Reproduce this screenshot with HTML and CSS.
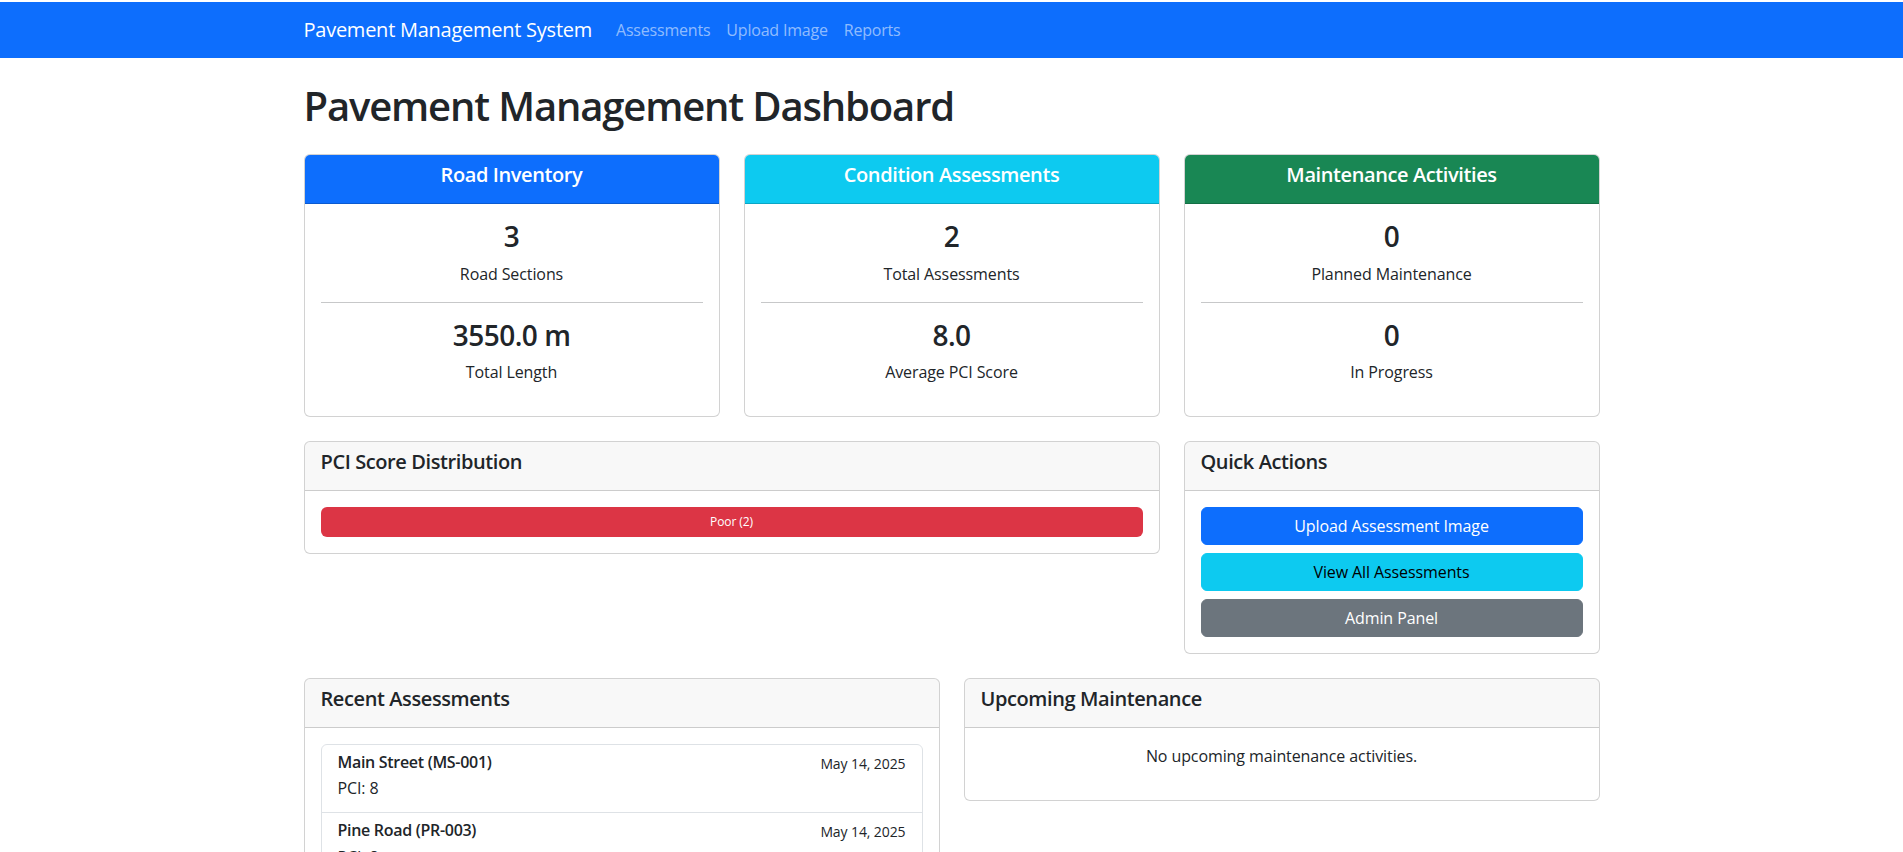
FILE: index.html
```html
<!DOCTYPE html>
<html lang="en">
<head>
<meta charset="utf-8">
<title>Pavement Management Dashboard</title>
<link rel="stylesheet" href="styles.css">
</head>
<body>
<nav class="navbar">
  <div class="container nav-inner">
    <a class="brand" href="#">Pavement Management System</a>
    <ul class="nav-links">
      <li><a href="#">Assessments</a></li>
      <li><a href="#">Upload Image</a></li>
      <li><a href="#">Reports</a></li>
    </ul>
  </div>
</nav>

<main class="container">
  <h1 class="page-title">Pavement Management Dashboard</h1>

  <div class="row">
    <div class="card span-4">
      <div class="card-header hdr-primary"><h5 class="hdr-title">Road Inventory</h5></div>
      <div class="card-body center">
        <h3 class="stat">3</h3>
        <p class="stat-label">Road Sections</p>
        <hr class="divider">
        <h3 class="stat">3550.0 m</h3>
        <p class="stat-label">Total Length</p>
      </div>
    </div>
    <div class="card span-4">
      <div class="card-header hdr-info"><h5 class="hdr-title">Condition Assessments</h5></div>
      <div class="card-body center">
        <h3 class="stat">2</h3>
        <p class="stat-label">Total Assessments</p>
        <hr class="divider">
        <h3 class="stat">8.0</h3>
        <p class="stat-label">Average PCI Score</p>
      </div>
    </div>
    <div class="card span-4">
      <div class="card-header hdr-success"><h5 class="hdr-title">Maintenance Activities</h5></div>
      <div class="card-body center">
        <h3 class="stat">0</h3>
        <p class="stat-label">Planned Maintenance</p>
        <hr class="divider">
        <h3 class="stat">0</h3>
        <p class="stat-label">In Progress</p>
      </div>
    </div>
  </div>

  <div class="row">
    <div class="card span-8">
      <div class="card-header"><h5 class="hdr-title left">PCI Score Distribution</h5></div>
      <div class="card-body">
        <div class="progress">
          <div class="progress-bar bar-danger" style="width: 100%">Poor (2)</div>
        </div>
      </div>
    </div>
    <div class="card span-4">
      <div class="card-header"><h5 class="hdr-title left">Quick Actions</h5></div>
      <div class="card-body">
        <div class="btn-stack">
          <a class="btn btn-primary" href="#">Upload Assessment Image</a>
          <a class="btn btn-info" href="#">View All Assessments</a>
          <a class="btn btn-secondary" href="#">Admin Panel</a>
        </div>
      </div>
    </div>
  </div>

  <div class="row">
    <div class="card span-6">
      <div class="card-header"><h5 class="hdr-title left">Recent Assessments</h5></div>
      <div class="card-body">
        <div class="list-group">
          <a class="list-item" href="#">
            <div class="item-top">
              <h6 class="item-title">Main Street (MS-001)</h6>
              <small class="item-date">May 14, 2025</small>
            </div>
            <p class="item-text">PCI: 8</p>
          </a>
          <a class="list-item" href="#">
            <div class="item-top">
              <h6 class="item-title">Pine Road (PR-003)</h6>
              <small class="item-date">May 14, 2025</small>
            </div>
            <p class="item-text">PCI: 8</p>
          </a>
        </div>
      </div>
    </div>
    <div class="card span-6">
      <div class="card-header"><h5 class="hdr-title left">Upcoming Maintenance</h5></div>
      <div class="card-body">
        <p class="empty center">No upcoming maintenance activities.</p>
      </div>
    </div>
  </div>
</main>
</body>
</html>
```
FILE: styles.css
```css
* { box-sizing: border-box; }

body {
  margin: 0;
  padding-top: 2px;
  font-family: "Open Sans", "Noto Sans", sans-serif;
  font-size: 16px;
  line-height: 1.5;
  color: #212529;
  background: #fff;
  letter-spacing: -0.1px;
}

.container {
  max-width: 1320px;
  margin: 0 auto;
  padding: 0 12px;
}

/* navbar */
.navbar {
  background: #0d6efd;
  padding: 8px 0;
}
.nav-inner {
  display: flex;
  align-items: center;
}
.brand {
  font-size: 20px;
  line-height: 30px;
  padding: 5px 0;
  margin-right: 16px;
  color: #fff;
  text-decoration: none;
  letter-spacing: -0.25px;
}
.nav-links {
  display: flex;
  list-style: none;
  margin: 0;
  padding: 0;
}
.nav-links a {
  display: block;
  padding: 8px;
  color: rgba(255, 255, 255, 0.55);
  text-decoration: none;
  letter-spacing: -0.2px;
}

/* heading */
.page-title {
  margin: 24px 0;
  font-size: 40px;
  font-weight: 600;
  line-height: 1.2;
  letter-spacing: -1.15px;
}

/* grid rows */
.row {
  display: grid;
  grid-template-columns: repeat(12, 1fr);
  column-gap: 24px;
  align-items: start;
  margin-bottom: 24px;
}
.span-4 { grid-column: span 4; }
.span-6 { grid-column: span 6; }
.span-8 { grid-column: span 8; }

/* cards */
.card {
  border: 1px solid rgba(0, 0, 0, 0.175);
  border-radius: 6px;
  background: #fff;
  overflow: hidden;
}
.card-header {
  padding: 8px 16px;
  background: rgba(33, 37, 41, 0.03);
  border-bottom: 1px solid rgba(0, 0, 0, 0.175);
}
.hdr-title {
  margin: 0 0 8px;
  font-size: 20px;
  font-weight: 600;
  line-height: 1.2;
  text-align: center;
  letter-spacing: -0.4px;
}
.hdr-title.left { text-align: left; }
.hdr-primary { background: #0d6efd; color: #fff; }
.hdr-info { background: #0dcaf0; color: #fff; }
.hdr-success { background: #198754; color: #fff; }

.card-body { padding: 16px; }
.center { text-align: center; }

.stat {
  margin: 0 0 8px;
  font-size: 28px;
  font-weight: 600;
  line-height: 1.2;
  letter-spacing: -0.5px;
}
.stat-label { margin: 0 0 16px; }
.divider {
  margin: 16px 0;
  border: 0;
  border-top: 1px solid #212529;
  opacity: 0.25;
}

/* progress */
.progress {
  display: flex;
  height: 30px;
  border-radius: 6px;
  background: #e9ecef;
  overflow: hidden;
  font-size: 12px;
}
.progress-bar {
  display: flex;
  flex-direction: column;
  justify-content: center;
  text-align: center;
  color: #fff;
  white-space: nowrap;
}
.bar-danger { background: #dc3545; }

/* buttons */
.btn-stack {
  display: grid;
  gap: 8px;
}
.btn {
  display: block;
  padding: 6px 12px;
  border: 1px solid transparent;
  border-radius: 6px;
  text-align: center;
  text-decoration: none;
  line-height: 24px;
}
.btn-primary { background: #0d6efd; border-color: #0d6efd; color: #fff; }
.btn-info { background: #0dcaf0; border-color: #0dcaf0; color: #000; }
.btn-secondary { background: #6c757d; border-color: #6c757d; color: #fff; }

/* list group */
.list-group {
  border: 1px solid #dee2e6;
  border-radius: 6px;
  overflow: hidden;
}
.list-item {
  display: block;
  padding: 8px 16px;
  color: #212529;
  text-decoration: none;
}
.list-item + .list-item { border-top: 1px solid #dee2e6; }
.item-top {
  display: flex;
  justify-content: space-between;
  align-items: flex-start;
}
.item-title {
  margin: 0 0 4px;
  font-size: 16px;
  font-weight: 600;
  line-height: 1.2;
  letter-spacing: -0.3px;
}
.item-date { font-size: 14px; }
.item-text { margin: 0 0 4px; }

.empty { margin: 0 0 16px; }
```
